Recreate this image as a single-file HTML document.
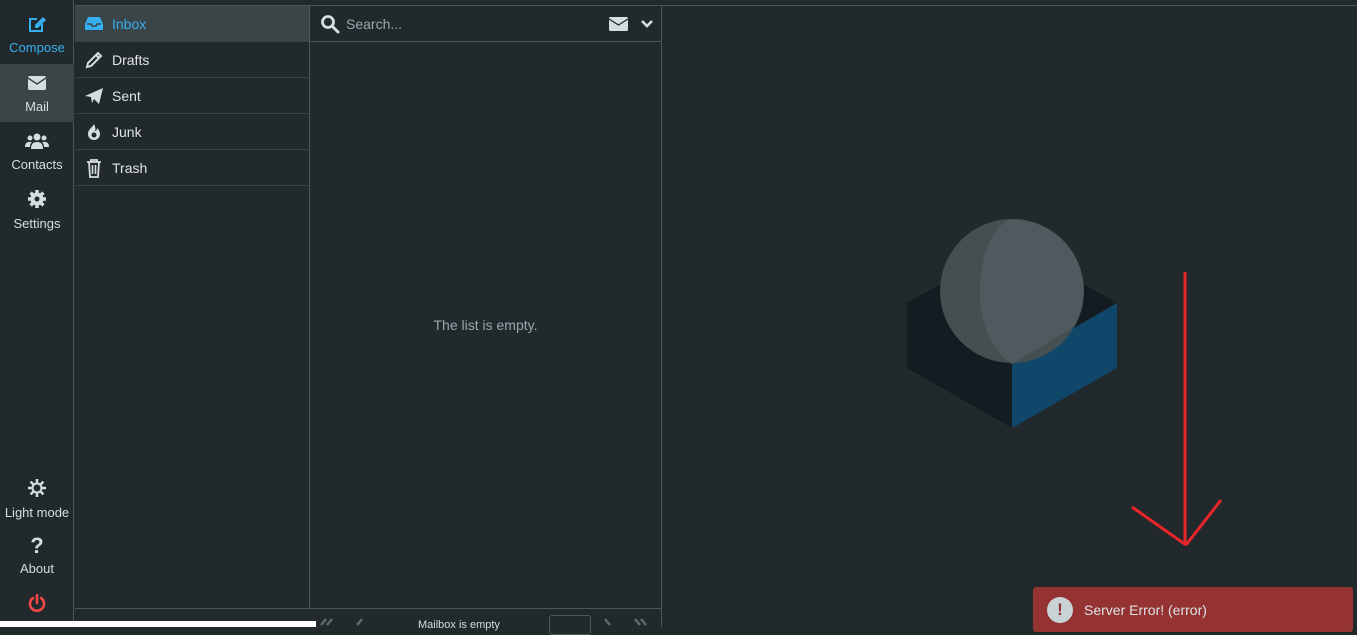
<!DOCTYPE html>
<html><head><meta charset="utf-8"><style>
*{margin:0;padding:0;box-sizing:border-box}
body{width:1357px;height:627px;overflow:hidden;background:#22292c;font-family:"Liberation Sans",sans-serif;position:relative;color:#d6dde0}
.abs{position:absolute}
.nav{left:0;top:0;width:74px;height:627px;background:#22292c;border-right:1px solid #4a5658}
.ni{position:absolute;left:0;width:74px;text-align:center;font-size:13px;color:#d6dde0}
.ni svg{display:block;margin:0 auto 6px}
.fl{left:75px;top:5px;width:235px;height:603px;border-top:1px solid #4a5658;border-right:1px solid #4a5658}
.fi{height:36px;border-bottom:1px solid #374245;display:flex;align-items:center;padding-left:9px;font-size:14px;color:#dfe5e7}
.fi svg{width:20px;height:20px;margin-right:8px}
.ml{left:310px;top:5px;width:352px;height:622px;border-top:1px solid #4a5658;border-right:1px solid #4a5658}
.rp{left:662px;top:5px;right:0;height:1px;background:#4a5658}
</style></head><body>
<div class="abs nav">
 <div class="ni" style="top:14px;color:#36b0f0">
  <svg width="22" height="20" viewBox="0 0 22 20"><path d="M3 4h8v2H5v10h10v-6h2v8H3z" fill="#36b0f0"/><path d="M9 11l8-8 3 3-8 8H9z" fill="#36b0f0"/></svg>Compose</div>
 <div style="position:absolute;left:0;top:64px;width:74px;height:58px;background:#3a4548"></div>
 <div class="ni" style="top:75px"><svg width="20" height="16" viewBox="0 0 20 16" style="margin-bottom:8px"><rect x="1" y="1" width="18" height="14" rx="1.5" fill="#d6dde0"/><path d="M1 3l9 6 9-6" stroke="#3a4548" stroke-width="1.5" fill="none"/></svg>Mail</div>
 <div class="ni" style="top:132px"><svg width="24" height="18" viewBox="0 0 24 18" style="margin-bottom:7px"><circle cx="12" cy="5" r="3.5" fill="#d6dde0"/><circle cx="5" cy="6" r="2.5" fill="#d6dde0"/><circle cx="19" cy="6" r="2.5" fill="#d6dde0"/><path d="M6 17c0-5 2-7 6-7s6 2 6 7zM0 15c0-4 2-5 4-5h3c-2 2-2 4-2 5zM24 15c0-4-2-5-4-5h-3c2 2 2 4 2 5z" fill="#d6dde0"/></svg>Contacts</div>
 <div class="ni" style="top:189px"><svg width="20" height="20" viewBox="0 0 20 20" style="margin-bottom:7px"><circle cx="10" cy="10" r="6.5" fill="#d6dde0"/><g stroke="#d6dde0" stroke-width="3.5"><path d="M10 1v18M1 10h18M3.6 3.6l12.8 12.8M16.4 3.6L3.6 16.4"/></g><circle cx="10" cy="10" r="2.5" fill="#22292c"/></svg>Settings</div>
 <div class="ni" style="top:478px"><svg width="20" height="20" viewBox="0 0 20 20" style="margin-bottom:7px"><g stroke="#d6dde0" stroke-width="2.5"><path d="M10 1v18M1 10h18M3.6 3.6l12.8 12.8M16.4 3.6L3.6 16.4"/></g><circle cx="10" cy="10" r="5.5" fill="#d6dde0"/><circle cx="10" cy="10" r="3.5" fill="#22292c"/></svg>Light mode</div>
 <div class="ni" style="top:536px"><div style="font-weight:bold;font-size:22px;line-height:20px;margin-bottom:5px">?</div>About</div>
 <div class="ni" style="top:593px"><svg width="20" height="20" viewBox="0 0 20 20"><path d="M6 5a7 7 0 1 0 8 0" stroke="#f04747" stroke-width="2.6" fill="none" stroke-linecap="round"/><path d="M10 2v8" stroke="#f04747" stroke-width="2.6" stroke-linecap="round"/></svg></div>
</div>
<div class="abs fl">
 <div class="fi" style="background:#3a4548;color:#36b0f0"><svg viewBox="0 0 20 20"><path d="M1 10l3-7h12l3 7v6H1z" fill="#36b0f0"/><path d="M3 10h4l1 2h4l1-2h4" stroke="#3a4548" stroke-width="1.5" fill="none"/></svg>Inbox</div>
 <div class="fi"><svg viewBox="0 0 20 20"><path d="M3 17l1-4L14 3l3 3L7 16z" fill="none" stroke="#d6dde0" stroke-width="2"/><path d="M12 5l3 3" stroke="#d6dde0" stroke-width="2"/></svg>Drafts</div>
 <div class="fi"><svg viewBox="0 0 20 20"><path d="M1 10L19 2l-4 16-5-5-2 4-1-6z" fill="#d6dde0"/></svg>Sent</div>
 <div class="fi"><svg viewBox="0 0 20 20"><path d="M10 2c-1 3-6 5-6 10a6 6 0 0 0 12 0c0-3-2-5-3-6 0 2-1 3-2 3 1-2 0-5-1-7z" fill="#d6dde0"/><circle cx="10" cy="13" r="2.5" fill="#22292c"/></svg>Junk</div>
 <div class="fi"><svg viewBox="0 0 20 20"><path d="M3 4h14M7 4V2h6v2M5 4l1 15h8l1-15" fill="none" stroke="#d6dde0" stroke-width="1.8"/><path d="M8.5 7v9M11.5 7v9" stroke="#d6dde0" stroke-width="1.6"/></svg>Trash</div>
</div>
<div class="abs ml">
 <div style="height:36px;border-bottom:1px solid #4a5658;display:flex;align-items:center;padding-left:10px;font-size:14px;color:#96a8ae">
  <svg width="20" height="20" viewBox="0 0 20 20" style="margin-right:6px"><circle cx="8" cy="8" r="5.5" stroke="#d6dde0" stroke-width="2.8" fill="none"/><path d="M12 12l6 6" stroke="#d6dde0" stroke-width="3" stroke-linecap="round"/></svg>Search...
  <svg width="20" height="16" viewBox="0 0 20 16" style="position:absolute;left:299px;top:10px"><rect x="0" y="1" width="19" height="14" rx="1.5" fill="#d6dde0"/><path d="M0 3l9.5 6 9.5-6" stroke="#22292c" stroke-width="1.3" fill="none"/></svg>
  <svg width="12" height="10" viewBox="0 0 12 10" style="position:absolute;left:331px;top:13px"><path d="M1 2l5 5 5-5" stroke="#d6dde0" stroke-width="2.6" fill="none"/></svg>
 </div>
 <div style="position:absolute;top:311px;width:100%;text-align:center;font-size:14px;color:#96a8ae">The list is empty.</div>
</div>
<div class="abs" style="left:75px;top:608px;width:587px;height:1px;background:#4a5658"></div>
<div class="abs" style="left:0;top:621px;width:316px;height:6px;background:#fff"></div>
<div class="abs" style="left:418px;top:619px;font-size:11px;color:#d6dde0">Mailbox is empty</div>
<div class="abs" style="left:549px;top:615px;width:42px;height:20px;border:1px solid #4a5658;border-radius:3px"></div>
<svg class="abs" style="left:318px;top:618px" width="340" height="12"><g stroke="#5c6a6e" stroke-width="2.5" fill="none"><path d="M8 1l-5 6M14 1l-5 6M44 1l-5 6M287 1l5 6M317 1l5 6M323 1l5 6"/></g></svg>
<div class="abs rp"></div>
<svg class="abs" style="left:0;top:0" width="1357" height="627">
 <polygon points="907,303 1012,243 1117,303 1117,368 1012,428 907,368" fill="#151c21"/>
 <polygon points="1012,364 1117,303 1117,368 1012,428" fill="#11466b"/>
 <circle cx="1012" cy="291" r="72" fill="#434f51"/>
 <path d="M1012 219a72 72 0 0 1 62 108l-62 37c-30-20-32-60-32-72 0-40 14-68 32-73z" fill="#4e5a5e"/>
 <path d="M1185 272V545M1132 507l54 38M1221 500l-35 45" stroke="#e8262a" stroke-width="3" fill="none"/>
</svg>
<div class="abs" style="left:1033px;top:587px;width:320px;height:45px;background:#953232;border-radius:3px;display:flex;align-items:center;padding-left:14px;font-size:14px;color:#dde3e5">
 <div style="width:26px;height:26px;border-radius:50%;background:#c9d3d6;color:#953232;font-weight:bold;text-align:center;line-height:26px;font-size:17px;margin-right:11px">!</div>Server Error! (error)</div>
</body></html>
